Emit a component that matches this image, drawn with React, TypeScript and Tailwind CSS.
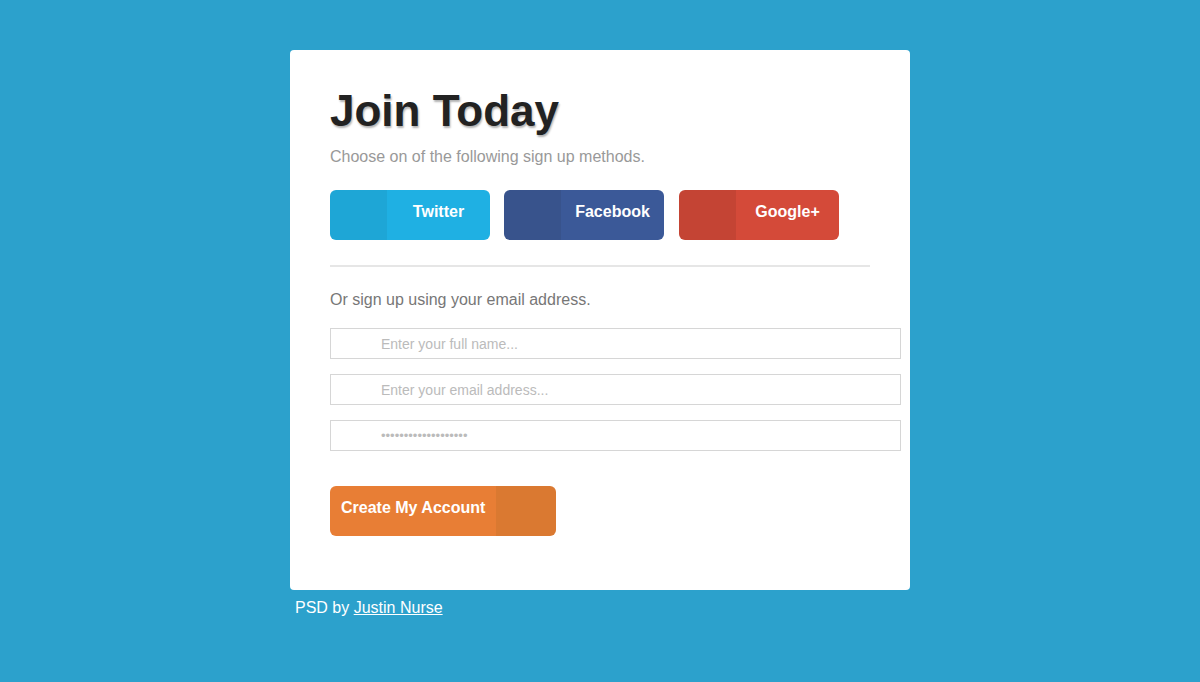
import React from "react";

export default function App() {
  const font = { fontFamily: '"Liberation Sans", Arial, sans-serif' };
  return (
    <div className="min-h-[682px] w-full bg-[#2ca1cc] pt-[50px]" style={font}>
      <div className="mx-auto w-[620px]">
        <div className="rounded-[4px] bg-white pl-[40px] pr-[40px] pt-[39px] pb-[54px]">
          <h1 className="text-[44px] font-bold leading-[44px] text-[#222] [text-shadow:1px_2px_2px_rgba(0,0,0,0.3)]">
            Join Today
          </h1>
          <p className="mt-[12px] text-[16px] leading-[24px] text-[#999]">
            Choose on of the following sign up methods.
          </p>
          <div className="mt-[21px] flex gap-[14px]">
            {[
              { label: "Twitter", l: "bg-[#1ea6d6]", r: "bg-[#1fb0e3]" },
              { label: "Facebook", l: "bg-[#38538c]", r: "bg-[#3b5998]" },
              { label: "Google+", l: "bg-[#c44434]", r: "bg-[#d44a39]" },
            ].map((b, i) => (
              <div
                key={b.label}
                className={`flex h-[50px] w-[160px] overflow-hidden rounded-[6px] ${i === 2 ? "ml-[1px]" : ""}`}
              >
                <div className={`w-[57px] ${b.l}`} />
                <div
                  className={`flex flex-1 items-start justify-center pt-[12px] text-[16px] font-bold leading-[20px] text-white ${b.r}`}
                >
                  {b.label}
                </div>
              </div>
            ))}
          </div>
          <div className="mt-[25px] h-[2px] w-full bg-[#e6e6e6]" />
          <p className="mt-[21px] text-[16px] leading-[24px] text-[#777]">
            Or sign up using your email address.
          </p>
          <div className="mt-[16px] flex flex-col gap-[15px]">
            {["Enter your full name...", "Enter your email address...", "•••••••••••••••••••"].map((t, i) => (
              <div
                key={i}
                className="flex h-[31px] w-[571px] items-center border border-[#d6d6d6] bg-white pl-[50px]"
              >
                <span className={`${i === 2 ? "text-[13px]" : "text-[14px]"} leading-[20px] text-[#bbbbbb]`}>
                  {t}
                </span>
              </div>
            ))}
          </div>
          <div className="mt-[35px] flex h-[50px] w-[226px] overflow-hidden rounded-[6px]">
            <div className="flex-1 bg-[#e87e35] pl-[11px] pt-[12px] text-[16px] font-bold leading-[20px] text-white">
              Create My Account
            </div>
            <div className="w-[60px] bg-[#da7931]" />
          </div>
        </div>
        <p className="mt-[6px] pl-[5px] text-[16px] leading-[24px] text-white">
          PSD by <a className="underline" href="#">Justin Nurse</a>
        </p>
      </div>
    </div>
  );
}
